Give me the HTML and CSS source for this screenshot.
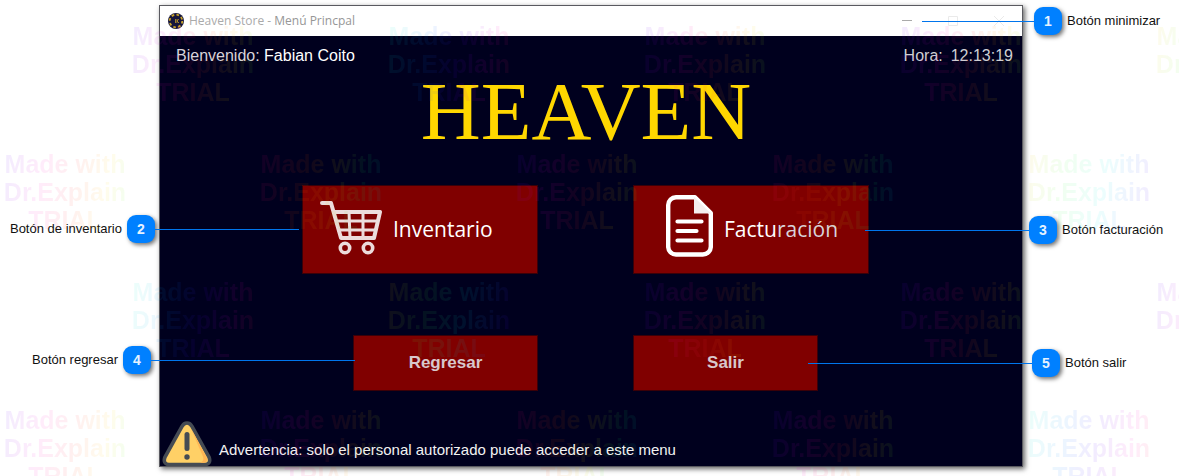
FILE: index.html
```html
<!DOCTYPE html>
<html lang="es">
<head>
<meta charset="utf-8">
<title>Heaven Store - Menú Princpal</title>
<link rel="stylesheet" href="styles.css">
</head>
<body>
<div class="page">
  <aside class="notes notes-left">
    <div class="note note-inventario"><span>Botón de inventario</span><b class="badge">2</b></div>
    <div class="note note-regresar"><span>Botón regresar</span><b class="badge">4</b></div>
  </aside>

  <main class="window">
    <header class="titlebar">
      <svg class="logo" viewBox="0 0 16 16" aria-hidden="true">
        <circle cx="8" cy="8" r="8" fill="#16163c"/>
        <circle cx="8" cy="8" r="6.3" fill="none" stroke="#c9a42a" stroke-width="1.8" stroke-dasharray="2.6 2.3"/>
        <path d="M7.5 6v4M10.800 6 9 8l2 2M9 6v4" fill="none" stroke="#b3922c" stroke-width=".9"/>
      </svg>
      <span class="caption">Heaven Store - <span class="caption-dark">Menú Princpal</span></span>
      <button class="winbtn winbtn-min" aria-label="Minimizar"><svg viewBox="0 0 10 10"><path d="M0 4.500h10"/></svg></button>
      <button class="winbtn" aria-label="Maximizar"><svg viewBox="0 0 10 10"><path d="M.5.5h9v9h-9z"/></svg></button>
      <button class="winbtn" aria-label="Cerrar"><svg viewBox="0 0 10 10"><path d="M0 0l10 10M10 0 0 10"/></svg></button>
    </header>
    <div class="content">
      <div class="status">
        <span><span class="dim">Bienvenido:</span> Fabian Coito</span>
        <span class="clock"><span>Hora:</span><span>12:13:19</span></span>
      </div>
      <h1 class="brand">HEAVEN</h1>
      <div class="actions">
        <button class="tile tile-inventario">
          <svg width="62" height="54" viewBox="0 0 62 54" fill="none" stroke="#ecdcdc" aria-hidden="true">
            <path d="M2 2h9l10 35h33l6-26H14" stroke-width="4" stroke-linecap="round" stroke-linejoin="round"/>
            <path d="M16 20h42M18 29h38M29 11l1 26M43 11v26" stroke-width="3"/>
            <circle cx="25" cy="47" r="4.700" stroke-width="3.600"/>
            <circle cx="48" cy="47" r="4.700" stroke-width="3.600"/>
          </svg>
          <span>Inventario</span>
        </button>
        <button class="tile tile-facturacion">
          <svg width="47" height="62" viewBox="0 0 47 62" fill="none" stroke="#fff" aria-hidden="true">
            <path d="M10 2.200h19L44.800 18v33a8 8 0 0 1-8 8.500H10A8 8 0 0 1 2.200 51V10A8 8 0 0 1 10 2.200z" stroke-width="4.400" stroke-linejoin="round"/>
            <path d="M28 2v16.500h17z" fill="#f4eeee" stroke="none"/>
            <path d="M11.500 26.500h24M11.500 36h19M11.500 45.500h24" stroke-width="4.200" stroke-linecap="round"/>
          </svg>
          <span>Factu<span class="dim">ración</span></span>
        </button>
        <button class="tile tile-small tile-regresar">Regresar</button>
        <button class="tile tile-small">Salir</button>
      </div>
      <div class="warning">
        <svg width="50" height="45" viewBox="0 0 50 45" aria-hidden="true">
          <path d="M25 2 C22.500 2 21 3.500 20 5.500L3 36C1 41 3.500 43.500 7 43.500H43C46.500 43.500 49 41 47 36L30 5.500C29 3.500 27.500 2 25 2z" fill="#ffd066" stroke="#454b54" stroke-width="3.600"/>
          <path d="M29 7.500 45 37c1 3-1 4.700-3 4.700h-4c3-1 4-3 3-6z" fill="#ffb655"/>
          <path d="M25 13.500v14" stroke="#454b54" stroke-width="5" stroke-linecap="round"/>
          <circle cx="25" cy="36" r="2.700" fill="#454b54"/>
        </svg>
        <span>Advertencia: solo el personal autorizado puede acceder a este menu</span>
      </div>
    </div>
  </main>

  <aside class="notes notes-right">
    <div class="note note-minimizar"><b class="badge">1</b><span>Botón minimizar</span></div>
    <div class="note note-facturacion"><b class="badge">3</b><span>Botón facturación</span></div>
    <div class="note note-salir"><b class="badge">5</b><span>Botón salir</span></div>
  </aside>

  <div class="marks">
    <div class="marks-row marks-shift">
      <p class="mark m1">Made with Dr.Explain TRIAL</p><p class="mark m2">Made with Dr.Explain TRIAL</p><p class="mark m1">Made with Dr.Explain TRIAL</p><p class="mark m1">Made with Dr.Explain TRIAL</p><p class="mark m3">Made with Dr.Explain TRIAL</p>
    </div>
    <div class="marks-row">
      <p class="mark m1">Made with Dr.Explain TRIAL</p><p class="mark m4">Made with Dr.Explain TRIAL</p><p class="mark m1">Made with Dr.Explain TRIAL</p><p class="mark m4">Made with Dr.Explain TRIAL</p><p class="mark m3">Made with Dr.Explain TRIAL</p>
    </div>
    <div class="marks-row marks-shift">
      <p class="mark m2">Made with Dr.Explain TRIAL</p><p class="mark m3">Made with Dr.Explain TRIAL</p><p class="mark m1">Made with Dr.Explain TRIAL</p><p class="mark m1">Made with Dr.Explain TRIAL</p><p class="mark m1">Made with Dr.Explain TRIAL</p>
    </div>
    <div class="marks-row">
      <p class="mark m1">Made with Dr.Explain TRIAL</p><p class="mark m1">Made with Dr.Explain TRIAL</p><p class="mark m4">Made with Dr.Explain TRIAL</p><p class="mark m1">Made with Dr.Explain TRIAL</p><p class="mark m2">Made with Dr.Explain TRIAL</p>
    </div>
  </div>
</div>
</body>
</html>
```

FILE: styles.css
```css
* { box-sizing: border-box; }

body {
  margin: 0;
  background: #fff;
  font-family: "Liberation Sans", Arial, sans-serif;
}

button {
  padding: 0;
  border: 0;
  font: inherit;
  cursor: pointer;
}

.page {
  position: relative;
  display: grid;
  grid-template-columns: 159px 1fr 156px;
  align-items: start;
  min-height: 100vh;
  padding-top: 5px;
  overflow: hidden;
}

/* Application window */
.window {
  border: 1px solid #5a5a60;
  background: #00001e;
  box-shadow: 2px 2px 5px rgba(0, 0, 0, .6);
}

.titlebar {
  display: flex;
  align-items: center;
  height: 30px;
  padding-left: 8px;
  background: #fff;
}

.logo { width: 16px; height: 16px; }

.caption {
  flex: 1;
  margin-left: 5px;
  font: 12px/16px "Open Sans", "Noto Sans", sans-serif;
  color: #aaa;
}

.caption-dark { color: #969696; }

.winbtn {
  display: grid;
  place-items: center;
  width: 46px;
  height: 30px;
  background: none;
}

.winbtn svg {
  width: 10px;
  height: 10px;
  fill: none;
  stroke: #eaeaea;
}

.winbtn-min svg { stroke: #aaa; }

.content { padding-top: 10px; }

.status {
  display: flex;
  justify-content: space-between;
  padding: 0 9px 0 16px;
  font-size: 16px;
  line-height: 20px;
  color: #fff;
}

.dim { color: #d8d3da; }

.clock {
  display: flex;
  gap: 8px;
  color: #cfcfd3;
}

.brand {
  margin: 4px 10px 33px 0;
  font: 83px/82px "Liberation Serif", "Times New Roman", serif;
  text-align: center;
  color: #ffd700;
}

.actions {
  display: grid;
  grid-template-columns: 236px 236px;
  justify-content: center;
  gap: 61px 95px;
  padding-right: 11px;
}

.tile {
  display: flex;
  align-items: center;
  height: 89px;
  border: 1px solid #3a0008;
  background: #800000;
  font: 21px/28px "Open Sans", "Noto Sans", sans-serif;
  color: #fff;
}

.tile-inventario { gap: 11px; padding: 0 0 4px 17px; }

.tile-inventario > span { padding-top: 2px; }

.tile-facturacion { gap: 11px; padding: 0 0 8px 32px; }

.tile-facturacion > span { padding-top: 6px; }

.tile-small {
  justify-content: center;
  width: 185px;
  height: 56px;
  font: bold 17px/20px "Liberation Sans", Arial, sans-serif;
  color: #d8c8cc;
}

.tile-regresar { justify-self: end; }

.warning {
  display: flex;
  align-items: center;
  gap: 7px;
  margin-top: 30px;
  padding-left: 2px;
  font-size: 15px;
  line-height: 20px;
  color: #f2f2f2;
}

.warning span { padding-top: 13px; }

/* Numbered annotations */
.notes {
  position: relative;
  z-index: 1;
  display: flex;
  flex-direction: column;
}

.notes-left { align-items: flex-end; padding-top: 210px; gap: 103px; }

.notes-right { align-items: flex-start; padding-top: 2px; }

.note {
  position: relative;
  display: flex;
  align-items: center;
  gap: 5px;
  font-size: 13px;
  line-height: 16px;
  white-space: nowrap;
  color: #111;
}

.badge {
  width: 28px;
  height: 28px;
  border-radius: 9px;
  background: #0080ff;
  box-shadow: 2px 2px 4px rgba(0, 0, 0, .55);
  font-size: 14px;
  line-height: 28px;
  text-align: center;
  color: #e6f2ff;
}

.note::before {
  content: "";
  position: absolute;
  top: 14px;
  height: 1px;
  background: #0075ec;
}

.notes-left .note::before { left: 100%; }
.notes-right .note::before { right: 100%; }

.note-inventario { margin-right: 4px; }
.note-inventario::before { width: 144px; }
.note-regresar { margin-right: 8px; }
.note-regresar::before { width: 204px; }
.note-minimizar { margin-left: 11px; }
.note-minimizar::before { width: 112px; }
.note-facturacion { margin: 181px 0 105px 6px; }
.note-facturacion::before { width: 164px; }
.note-salir { margin-left: 9px; }
.note-salir::before { width: 224px; }

/* Trial watermark */
.marks {
  position: absolute;
  inset: 0;
  z-index: 2;
  display: flex;
  flex-direction: column;
  gap: 44px;
  padding-top: 22px;
  overflow: hidden;
  pointer-events: none;
}

.marks-row {
  display: flex;
  gap: 132px;
  padding-left: 3px;
}

.marks-shift { padding-left: 131px; }

.mark {
  flex: none;
  width: 124px;
  margin: 0;
  font-size: 25px;
  font-weight: bold;
  line-height: 28px;
  text-align: center;
  background-clip: text;
  -webkit-background-clip: text;
  color: transparent;
  opacity: .07;
}

.m1 { background-image: linear-gradient(100deg, #50f, #f0c 30%, #f33 55%, #fd0 80%, #3f4); }
.m2 { background-image: linear-gradient(100deg, #0fc, #08f 30%, #50f 55%, #f0c 80%, #f33); }
.m3 { background-image: linear-gradient(100deg, #fc0, #4f4 30%, #0ee 60%, #50f 95%); }
.m4 { background-image: linear-gradient(100deg, #f09, #f50 35%, #dd0 60%, #0e6 80%, #0af); }
```
